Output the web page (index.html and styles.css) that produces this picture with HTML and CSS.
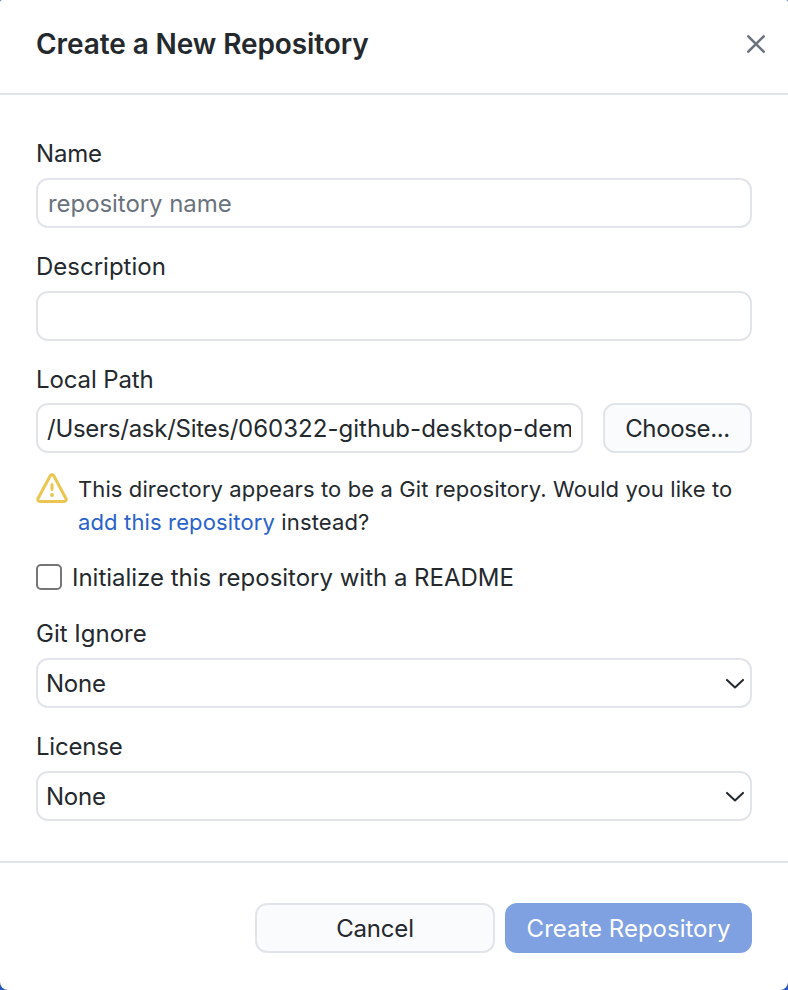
FILE: index.html
```html
<!DOCTYPE html>
<html lang="en">
<head>
<meta charset="utf-8">
<title>Create a New Repository</title>
<link rel="stylesheet" href="styles.css">
</head>
<body>
<form class="dialog">
  <header class="dialog-header">
    <h1 class="title">Create a New Repository</h1>
    <button class="close" type="button" aria-label="Close">
      <svg width="20" height="20" viewBox="0 0 20 20"><path d="M2.3 2.3 17.7 17.7M17.7 2.3 2.3 17.7"/></svg>
    </button>
  </header>
  <main class="dialog-content">
    <div class="field">
      <label class="label tight" for="name">Name</label>
      <input class="control name-input" id="name" type="text" placeholder="repository name">
    </div>
    <div class="field">
      <label class="label" for="description">Description</label>
      <input class="control" id="description" type="text">
    </div>
    <div class="field path-field">
      <span class="label path-label">Local Path</span>
      <div class="path-row">
        <div class="control path"><span class="path-text"><span class="path-parent">/Users/ask/Sites/</span>060322-github-desktop-demo</span></div>
        <button class="button choose" type="button">Choose...</button>
      </div>
    </div>
    <div class="warning">
      <svg class="warning-icon" width="32" height="32" viewBox="0 0 16 16"><path d="M6.457 1.047c.659-1.234 2.427-1.234 3.086 0l6.082 11.378A1.75 1.75 0 0 1 14.082 15H1.918a1.75 1.75 0 0 1-1.543-2.575Zm1.763.707a.25.25 0 0 0-.44 0L1.698 13.132a.25.25 0 0 0 .22.368h12.164a.25.25 0 0 0 .22-.368Zm.53 3.996v2.5a.75.75 0 0 1-1.5 0v-2.5a.75.75 0 0 1 1.5 0ZM9 11a1 1 0 1 1-2 0 1 1 0 0 1 2 0Z"/></svg>
      <p class="warning-text">This directory appears to be a Git repository. Would you like to<br><span class="second-line"><a class="link">add this repository</a> instead?</span></p>
    </div>
    <label class="check-row"><input class="checkbox" type="checkbox"><span class="check-text">Initialize this repository with a README</span></label>
    <div class="field">
      <span class="label">Git Ignore</span>
      <div class="control select"><span class="value">None</span><svg width="18" height="11" viewBox="0 0 18 11"><path d="M1 1.9 9 9.5 17 1.9"/></svg></div>
    </div>
    <div class="field">
      <span class="label tight">License</span>
      <div class="control select"><span class="value">None</span><svg width="18" height="11" viewBox="0 0 18 11"><path d="M1 1.9 9 9.5 17 1.9"/></svg></div>
    </div>
  </main>
  <footer class="dialog-footer">
    <button class="button cancel" type="button">Cancel</button>
    <button class="button primary" type="button">Create Repository</button>
  </footer>
</form>
</body>
</html>
```

FILE: styles.css
```css
* { box-sizing: border-box; }
html { background: #2457bd; }
body {
  margin: 0;
  font-family: Inter, "Liberation Sans", sans-serif;
  font-size: 24px;
  line-height: 30px;
  color: #24292e;
}
button, input { font: inherit; color: inherit; letter-spacing: inherit; }
.dialog {
  display: flex;
  flex-direction: column;
  height: 990px;
  background: #fff;
  border-radius: 2px 2px 8px 8px;
  overflow: hidden;
}
.dialog-header {
  display: flex;
  align-items: center;
  justify-content: space-between;
  height: 95px;
  padding: 0 22px 5px 36px;
  border-bottom: 2px solid #e1e4e8;
}
.title { margin: 0; font-size: 28px; font-weight: 600; line-height: 36px; letter-spacing: -0.09px; white-space: nowrap; }
.close { display: flex; padding: 0; border: 0; background: none; }
.close svg { fill: none; stroke: #6a737d; stroke-width: 2.6; stroke-linecap: round; }
.dialog-content { flex: 1; padding: 44px 36px 0; }
.field { margin-bottom: 24px; }
.label { display: block; height: 30px; margin-bottom: 9px; white-space: nowrap; }
.tight { letter-spacing: -0.2px; }
.control {
  display: flex;
  align-items: center;
  width: 100%;
  height: 50px;
  padding: 0 10px;
  border: 2px solid #e1e4e8;
  border-radius: 12px;
  background: #fff;
}
.control::placeholder { color: #6a737d; opacity: 1; }
.name-input { letter-spacing: -0.06px; }
.path-label { margin-bottom: 8px; letter-spacing: -0.12px; }
.path-row { display: flex; gap: 20px; }
.path { flex: 1; min-width: 0; width: auto; padding: 1px 10px 0 9px; }
.path-text { overflow: hidden; white-space: nowrap; letter-spacing: 0.02px; }
.path-parent { letter-spacing: -0.27px; }
.button {
  height: 50px;
  padding: 2px 0 0;
  border: 2px solid #e1e4e8;
  border-radius: 12px;
  background: #fafbfc;
  white-space: nowrap;
}
.choose { width: 149px; letter-spacing: -0.36px; }
.path-field { margin-bottom: 20px; }
.warning { display: flex; gap: 10px; height: 66px; }
.warning-icon { flex: none; fill: #eac54f; }
.warning-text { margin: 0; font-size: 22px; line-height: 33px; letter-spacing: 0.105px; white-space: nowrap; }
.second-line { letter-spacing: 0.14px; }
.link { color: #2a62c9; }
.check-row { display: flex; align-items: center; gap: 10px; height: 30px; margin: 23px 0 27px; white-space: nowrap; }
.check-text { padding-top: 2px; letter-spacing: -0.01px; }
.checkbox {
  appearance: none;
  flex: none;
  width: 26px;
  height: 26px;
  margin: 0;
  border: 2px solid #767676;
  border-radius: 5px;
  background: #fff;
}
.select { justify-content: space-between; padding: 0 6px 0 8px; }
.value { padding-top: 1px; letter-spacing: -0.25px; }
.select svg { fill: none; stroke: #24292e; stroke-width: 2; stroke-linecap: round; stroke-linejoin: round; }
.dialog-footer {
  display: flex;
  justify-content: flex-end;
  gap: 10px;
  height: 129px;
  padding: 40px 36px 0;
  border-top: 2px solid #e1e4e8;
}
.cancel { width: 240px; letter-spacing: -0.2px; }
.primary { width: 247px; border: 0; background: #80a1e1; color: #fff; }
```
